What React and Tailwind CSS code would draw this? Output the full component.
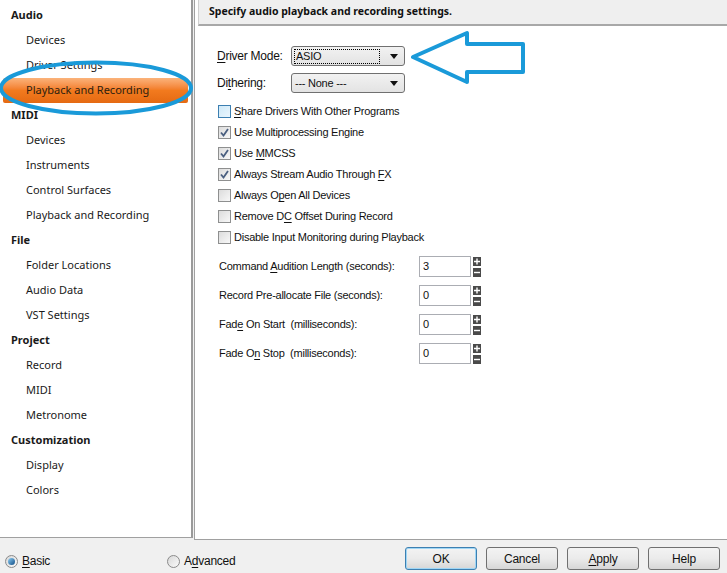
import React from "react";

const tree = [
  { label: "Audio", head: true },
  { label: "Devices" },
  { label: "Driver Settings" },
  { label: "Playback and Recording", active: true },
  { label: "MIDI", head: true },
  { label: "Devices" },
  { label: "Instruments" },
  { label: "Control Surfaces" },
  { label: "Playback and Recording" },
  { label: "File", head: true },
  { label: "Folder Locations" },
  { label: "Audio Data" },
  { label: "VST Settings" },
  { label: "Project", head: true },
  { label: "Record" },
  { label: "MIDI" },
  { label: "Metronome" },
  { label: "Customization", head: true },
  { label: "Display" },
  { label: "Colors" },
];

const U = ({ children }) => <span className="underline underline-offset-2">{children}</span>;

const checks = [
  { text: <><U>S</U>hare Drivers With Other Programs</>, on: false, hover: true },
  { text: <>Use Multiprocessing Engine</>, on: true },
  { text: <>Use <U>M</U>MCSS</>, on: true },
  { text: <>Always Stream Audio Through <U>F</U>X</>, on: true },
  { text: <>Always O<U>p</U>en All Devices</>, on: false },
  { text: <>Remove D<U>C</U> Offset During Record</>, on: false },
  { text: <>Disable Input Monitoring during Playback</>, on: false },
];

const spins = [
  { text: <>Command <U>A</U>udition Length (seconds):</>, value: "3" },
  { text: <>Record Pre-allocate File (seconds):</>, value: "0" },
  { text: <>Fad<U>e</U> On Start &nbsp;(milliseconds):</>, value: "0" },
  { text: <>Fade O<U>n</U> Stop &nbsp;(milliseconds):</>, value: "0" },
];

function Checkbox({ on, hover }) {
  return (
    <span
      className={`w-[13px] h-[13px] border flex items-center justify-center bg-gradient-to-br ${
        hover ? "border-[#3c7fb1] from-[#cfe9f8] to-[#eaf6fd]" : "border-[#8e8f8f] from-[#dcdcdc] to-[#f8f8f8]"
      }`}
    >
      {on && (
        <svg width="9" height="9" viewBox="0 0 9 9">
          <path d="M1 4.5 L3.5 7.5 L8 1" fill="none" stroke="#4a5f80" strokeWidth="1.8" />
        </svg>
      )}
    </span>
  );
}

function Select({ value, focus }) {
  return (
    <div className="w-[114px] h-[20px] border border-[#707070] rounded-[3px] bg-gradient-to-b from-[#f2f2f2] to-[#e3e3e3] flex items-center pl-[2px] pr-[6px]">
      <div className={`flex-1 h-[15px] flex items-center px-[1px] ${focus ? "border border-dotted border-black" : ""}`}>
        {value}
      </div>
      <svg width="8" height="5" viewBox="0 0 8 5" className="ml-[10px]">
        <path d="M0 0 H8 L4 5 Z" fill="#111" />
      </svg>
    </div>
  );
}

function Spin({ value }) {
  return (
    <div className="flex items-center gap-[2px]">
      <div className="w-[52px] h-[21px] border border-[#abadb3] bg-white pl-[3px] flex items-center">{value}</div>
      <div className="flex flex-col gap-[2px]">
        <svg width="8" height="9" viewBox="0 0 8 9">
          <rect width="8" height="9" fill="#4a4a4a" />
          <path d="M1 4.5 H7 M4 1.5 V7.5" stroke="#fff" strokeWidth="1.4" />
        </svg>
        <svg width="8" height="9" viewBox="0 0 8 9">
          <rect width="8" height="9" fill="#4a4a4a" />
          <path d="M1 4.5 H7" stroke="#fff" strokeWidth="1.4" />
        </svg>
      </div>
    </div>
  );
}

function Button({ children, def }) {
  return (
    <button
      className={`w-[72px] h-[23px] rounded-[3px] border bg-gradient-to-b from-[#f3f3f3] via-[#ebebeb] to-[#d6d6d6] text-[12px] tracking-[-0.2px] text-[#111] ${
        def ? "border-[#3c7fb1] shadow-[inset_0_0_0_1px_#9fd6f5]" : "border-[#707070]"
      }`}
    >
      {children}
    </button>
  );
}

function Radio({ on, children }) {
  return (
    <div className="flex items-center gap-[4px]">
      <span className="w-[13px] h-[13px] rounded-full border border-[#8a8a8a] bg-gradient-to-br from-[#d8d8d8] to-[#fafafa] flex items-center justify-center">
        {on && <span className="w-[7px] h-[7px] rounded-full bg-gradient-to-br from-[#8fd0f5] to-[#0d4e86]" />}
      </span>
      <span>{children}</span>
    </div>
  );
}

export default function App() {
  return (
    <div className="relative w-[727px] h-[573px] bg-[#f0f0f0] overflow-hidden flex flex-col text-[#111] font-['Liberation_Sans',Arial,sans-serif] text-[11px] tracking-[-0.25px]">
      <div className="flex h-[540px]">
        <div className="w-[193px] h-[538px] bg-white border-r-2 border-b border-r-[#9a9a9a] border-b-[#a0a0a0] pt-[3px] font-['Noto_Sans',sans-serif] text-[11px] tracking-normal text-[#1a1a1a]">
          {tree.map((t, i) =>
            t.active ? (
              <div
                key={i}
                className="mx-[3px] h-[25px] flex items-center pl-[23px] rounded-[2px] bg-gradient-to-b from-[#fbb37a] via-[#f27a1e] to-[#e56a12] text-[#2d1e10]"
              >
                {t.label}
              </div>
            ) : (
              <div
                key={i}
                className={`h-[25px] flex items-center ${t.head ? "pl-[11px] font-bold" : "pl-[26px]"}`}
              >
                {t.label}
              </div>
            )
          )}
        </div>
        <div className="flex-1 ml-[1px] bg-white border-l border-b border-[#a0a0a0] pl-[3px]">
          <div className="h-[26px] bg-[#efefef] border-b-2 border-l border-[#a8a8a8] border-l-[#d0d0d0] flex items-center pl-[10px] font-['Noto_Sans',sans-serif] font-bold text-[10.5px] tracking-normal">
            Specify audio playback and recording settings.
          </div>
          <div className="pl-[19px] pt-[20px]">
            <div className="flex items-center h-[20px]">
              <span className="w-[74px] text-[12px]"><U>D</U>river Mode:</span>
              <Select value="ASIO" focus />
            </div>
            <div className="flex items-center h-[20px] mt-[7px]">
              <span className="w-[74px] text-[12px]">Di<U>t</U>hering:</span>
              <Select value="--- None ---" />
            </div>
            <div className="mt-[8px] flex flex-col pl-[1px]">
              {checks.map((c, i) => (
                <div key={i} className="h-[21px] flex items-center gap-[3px]">
                  <Checkbox on={c.on} hover={c.hover} />
                  <span>{c.text}</span>
                </div>
              ))}
            </div>
            <div className="mt-[8px] flex flex-col gap-[8px] pl-[2px]">
              {spins.map((s, i) => (
                <div key={i} className="h-[21px] flex items-center">
                  <span className="w-[200px]">{s.text}</span>
                  <Spin value={s.value} />
                </div>
              ))}
            </div>
          </div>
        </div>
      </div>
      <div className="flex-1 flex items-start pt-[7px] pl-[5px] pr-[7px] text-[12px]">
        <div className="w-[162px] mt-[5px]">
          <Radio on>
            <U>B</U>asic
          </Radio>
        </div>
        <div className="mt-[5px]">
          <Radio>
            A<U>d</U>vanced
          </Radio>
        </div>
        <div className="ml-auto flex gap-[9px]">
          <Button def>OK</Button>
          <Button>Cancel</Button>
          <Button>
            <U>A</U>pply
          </Button>
          <Button>Help</Button>
        </div>
      </div>

      <svg className="absolute left-0 top-0 pointer-events-none" width="727" height="573">
        <ellipse cx="96" cy="88" rx="95" ry="25.5" fill="none" stroke="#1a9ad9" strokeWidth="4" />
        <path
          d="M413 57 L467 33 L467 44 L523 44 L523 72 L467 72 L467 82 Z"
          fill="none"
          stroke="#1a9ad9"
          strokeWidth="4"
          strokeLinejoin="round"
        />
      </svg>
    </div>
  );
}
